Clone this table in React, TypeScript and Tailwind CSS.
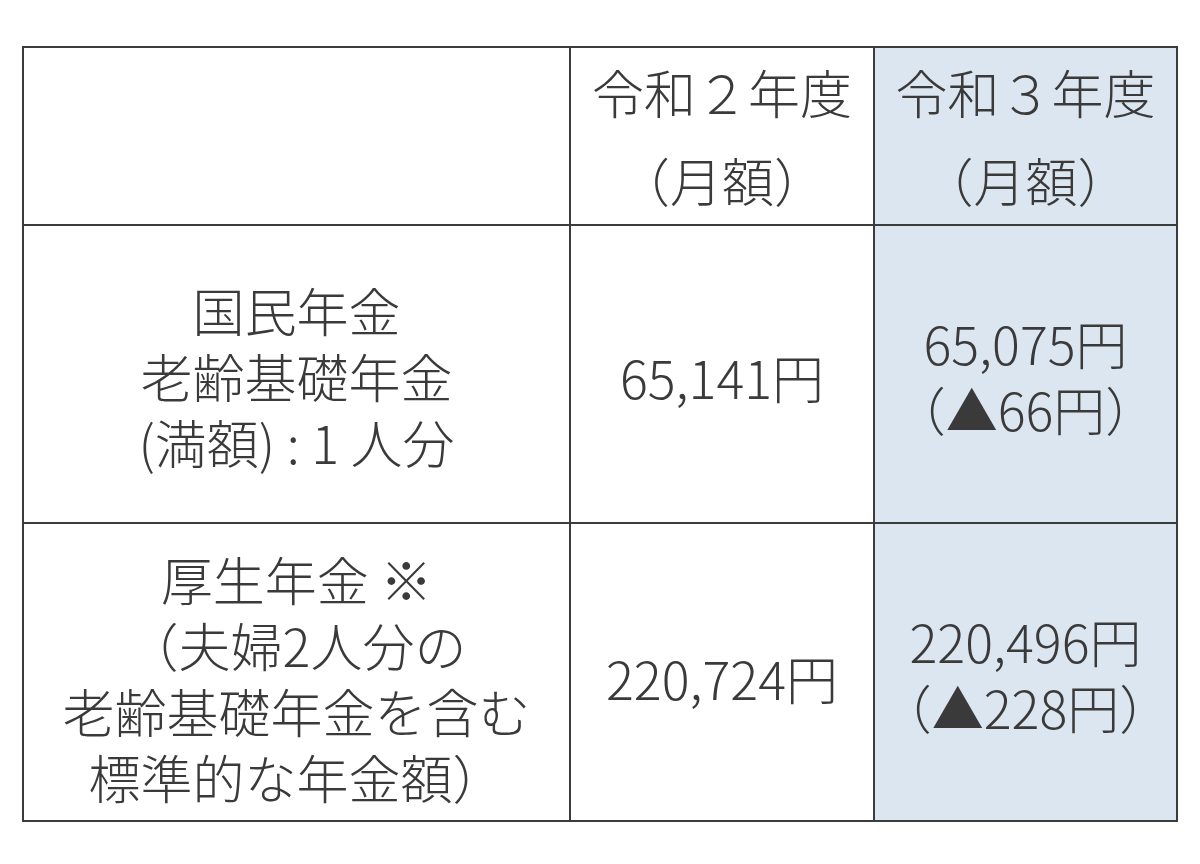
const cellBase =
  "flex flex-col items-center justify-center text-center text-[52px] font-light leading-[66px] text-[#3a3a3a]";

const rows = [
  {
    label: ["国民年金", "老齢基礎年金", "(満額) : 1 人分"],
    prev: ["65,141円"],
    next: ["65,075円", "（▲66円）"],
  },
  {
    label: ["厚生年金 ※", "（夫婦2人分の", "老齢基礎年金を含む", "標準的な年金額）"],
    prev: ["220,724円"],
    next: ["220,496円", "（▲228円）"],
  },
];

function Lines({ lines }: { lines: string[] }) {
  return (
    <>
      {lines.map((line, i) => (
        <span key={i} className="block whitespace-nowrap">
          {line}
        </span>
      ))}
    </>
  );
}

export default function App() {
  return (
    <div
      className="h-[864px] w-[1200px] bg-white pl-[22px] pt-[46px]"
      style={{ fontFamily: '"Noto Sans CJK JP", "Noto Sans", sans-serif' }}
    >
      <div className="grid w-[1156px] grid-cols-[545px_302px_301px] grid-rows-[176px_296px_296px] gap-[2px] bg-[#3c3c3c] p-[2px]">
        <div className="bg-white" />
        <div className={`${cellBase} bg-white leading-[88px]`}>
          <Lines lines={["令和２年度", "（月額）"]} />
        </div>
        <div className={`${cellBase} bg-[#dce6f1] leading-[88px]`}>
          <Lines lines={["令和３年度", "（月額）"]} />
        </div>

        {rows.map((row, i) => (
          <div key={i} className="contents">
            <div className={`${cellBase} bg-white ${i === 0 ? "pt-[4px]" : "pt-[12px]"}`}>
              <Lines lines={row.label} />
            </div>
            <div className={`${cellBase} bg-white ${i === 0 ? "pt-[6px]" : "pt-[12px]"}`}>
              <Lines lines={row.prev} />
            </div>
            <div className={`${cellBase} bg-[#dce6f1] pt-[4px]`}>
              <Lines lines={row.next} />
            </div>
          </div>
        ))}
      </div>
    </div>
  );
}
